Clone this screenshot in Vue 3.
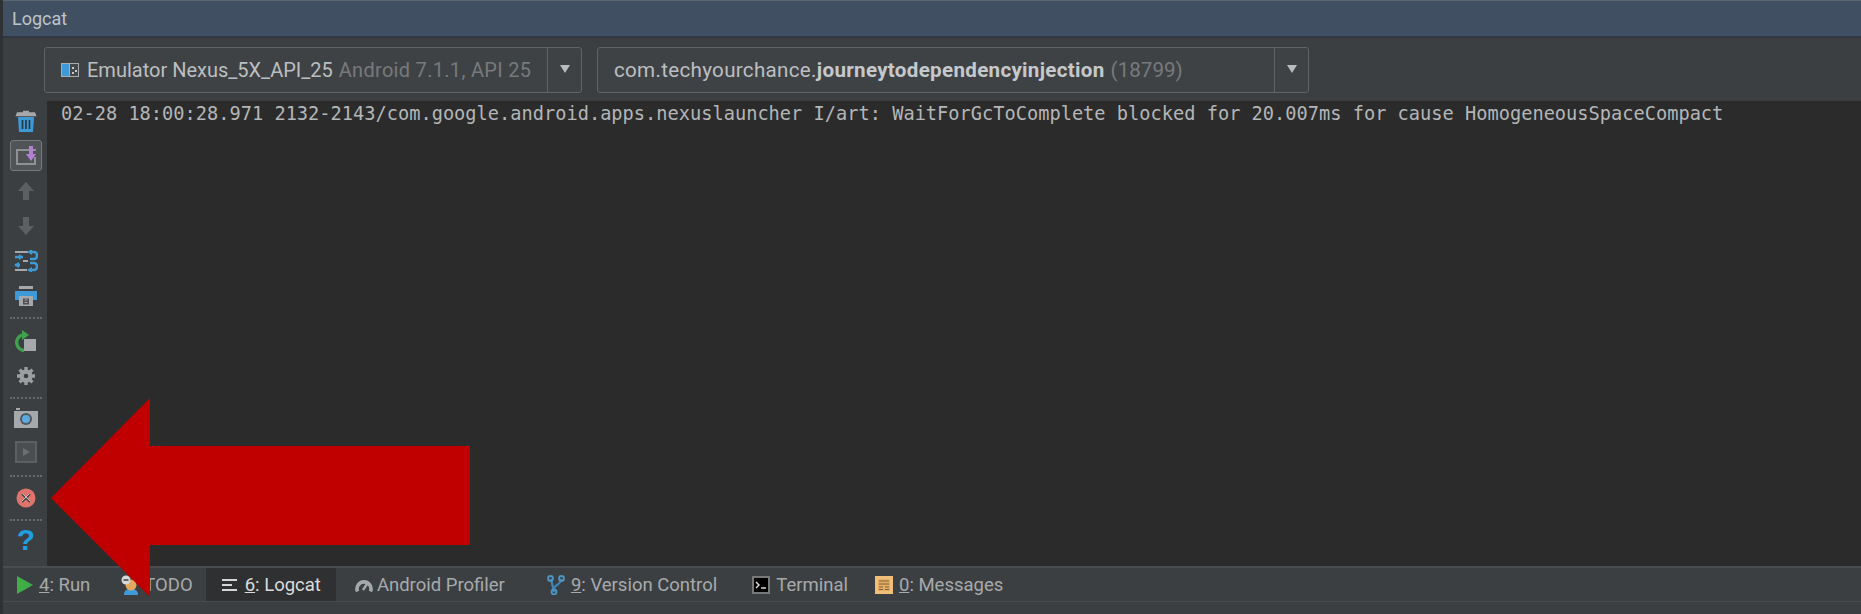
<script setup>
const logLine = '02-28 18:00:28.971 2132-2143/com.google.android.apps.nexuslauncher I/art: WaitForGcToComplete blocked for 20.007ms for cause HomogeneousSpaceCompact'
</script>

<template>
  <div class="window">
    <header class="title">Logcat</header>

    <div class="toolbar">
      <div class="combo combo-device">
        <div class="combo-value">
          <svg class="device-icon" viewBox="0 0 18 16" width="18" height="16">
            <rect x="0" y="1" width="18" height="14" fill="#a9adb0" />
            <rect x="1" y="2" width="7" height="12" fill="#3d9ad6" />
            <rect x="9" y="2" width="8" height="12" fill="#45484a" />
            <rect x="11" y="5" width="2" height="2" fill="#c8c8c8" />
            <rect x="14" y="8" width="2" height="2" fill="#c8c8c8" />
            <rect x="11" y="10" width="2" height="2" fill="#c8c8c8" />
          </svg>
          <span>Emulator Nexus_5X_API_25</span>
          <span class="muted">Android 7.1.1, API 25</span>
        </div>
        <div class="combo-arrow"><i></i></div>
      </div>
      <div class="combo combo-process">
        <div class="combo-value">
          <span class="pkg">com.techyourchance.<b>journeytodependencyinjection</b></span>
          <span class="muted">(18799)</span>
        </div>
        <div class="combo-arrow"><i></i></div>
      </div>
    </div>

    <main class="body">
      <aside class="side">
        <button class="tool">
          <svg viewBox="0 0 22 24" width="22" height="24">
            <path d="M8 2.5h6M1.5 6.5l1-2.5h17l1 2.5z" fill="#a6a9ab" stroke="#a6a9ab" stroke-width="1.4" />
            <path d="M3 8h16l-1 15H4z" fill="#3d9ad6" />
            <path d="M7.5 11v9M11 11v9M14.5 11v9" stroke="#23333f" stroke-width="1.6" />
          </svg>
        </button>
        <button class="tool tool-on">
          <svg viewBox="0 0 24 22" width="24" height="22">
            <path d="M2 4h20v2H4v12h16V12h2v8H2z" fill="#8f9294" />
            <rect x="4" y="6" width="12" height="12" fill="#4f5254" />
            <path d="M15 1h4v8h3l-5 7-5-7h3z" fill="#b57fd6" />
          </svg>
        </button>
        <button class="tool">
          <svg viewBox="0 0 18 20" width="18" height="20"><path d="M9 1l8 9h-5v9H6v-9H1z" fill="#5d6062" /></svg>
        </button>
        <button class="tool">
          <svg viewBox="0 0 18 20" width="18" height="20"><path d="M9 19l8-9h-5V1H6v9H1z" fill="#5d6062" /></svg>
        </button>
        <button class="tool">
          <svg viewBox="0 0 24 22" width="24" height="22">
            <path d="M1 2h13M1 20h12M9 11h5" stroke="#a6a9ab" stroke-width="2" fill="none" />
            <path d="M1 7h8M1 15h5" stroke="#3d9ad6" stroke-width="2.6" fill="none" />
            <path d="M16 2h4a3 3 0 0 1 3 3v1a3 3 0 0 1-3 3h-4M16 13h4a3 3 0 0 1 3 3v1a3 3 0 0 1-3 3h-4" stroke="#3d9ad6" stroke-width="2.6" fill="none" />
            <path d="M18 -1l-5 3 5 3zM18 17l-5 3 5 3zM5 10l4-3-4-3zM5 12v6l-5-3z" fill="#3d9ad6" />
          </svg>
        </button>
        <button class="tool">
          <svg viewBox="0 0 22 22" width="22" height="22">
            <rect x="4" y="1" width="14" height="3" fill="#a6a9ab" />
            <path d="M0 6h22v9h-4v-4H4v4H0z" fill="#3d9ad6" />
            <rect x="4" y="11" width="14" height="10" fill="#a6a9ab" />
            <path d="M8 13.5h6v6H8z" fill="#4b4e50" />
            <path d="M9.5 15h3M9.5 17.5h3" stroke="#a6a9ab" stroke-width="1.2" />
          </svg>
        </button>
        <div class="sep"></div>
        <button class="tool">
          <svg viewBox="0 0 22 22" width="22" height="22">
            <rect x="9" y="9" width="12" height="12" fill="#a6a9ab" />
            <path d="M9 20.5A8 8 0 0 1 7 5" stroke="#3fa34d" stroke-width="3.4" fill="none" />
            <path d="M7 0l7 5-7 5z" fill="#3fa34d" />
          </svg>
        </button>
        <button class="tool">
          <svg viewBox="0 0 20 20" width="20" height="20">
            <circle cx="10" cy="10" r="4.6" fill="none" stroke="#9c9fa1" stroke-width="4" />
            <path d="M10 1v18M1 10h18M3.6 3.6l12.8 12.8M16.4 3.6L3.6 16.4" stroke="#9c9fa1" stroke-width="3.4" />
            <circle cx="10" cy="10" r="2.3" fill="#3c3f41" />
          </svg>
        </button>
        <div class="sep"></div>
        <button class="tool">
          <svg viewBox="0 0 24 20" width="24" height="20">
            <rect x="2" y="0" width="4" height="2" fill="#a6a9ab" />
            <path d="M0 3h24v17H0z" fill="#a6a9ab" />
            <circle cx="12" cy="11" r="6" fill="#53575a" />
            <circle cx="12" cy="11" r="4" fill="#5aa9e0" />
          </svg>
        </button>
        <button class="tool">
          <svg viewBox="0 0 22 22" width="22" height="22">
            <rect x="1" y="1" width="20" height="20" fill="#4b4e50" stroke="#5d6062" stroke-width="2" />
            <path d="M8 7l7 4-7 4z" fill="#6c7072" />
          </svg>
        </button>
        <div class="sep"></div>
        <button class="tool">
          <svg viewBox="0 0 20 20" width="20" height="20">
            <circle cx="10" cy="10" r="9.5" fill="#e0736d" />
            <path d="M6 6l8 8M14 6l-8 8" stroke="#48494a" stroke-width="2" />
            <path d="M6.5 5.5l8 8M13.5 5.5l-8 8" stroke="#e8d8d0" stroke-width=".8" />
          </svg>
        </button>
        <div class="sep"></div>
        <button class="tool help">?</button>
      </aside>
      <pre class="log">{{ logLine }}</pre>
    </main>

    <footer class="dock">
      <div class="tabs">
        <div class="tab tab-run">
          <svg viewBox="0 0 16 18" width="16" height="18"><path d="M0 0l16 9-16 9z" fill="#3fae49" /></svg>
          <span><u>4</u>: Run</span>
        </div>
        <div class="tab tab-todo">
          <svg viewBox="0 0 20 20" width="20" height="20">
            <path d="M3 20c0-5 3-6 7-6s7 1 7 6z" fill="#3d9ad6" />
            <circle cx="10" cy="10" r="5.5" fill="#e2a65e" />
            <circle cx="5" cy="5" r="4.5" fill="#d8d8d8" />
            <path d="M2.5 5h5" stroke="#45484a" stroke-width="1.6" />
          </svg>
          <span>TODO</span>
        </div>
        <div class="tab tab-active">
          <svg viewBox="0 0 16 12" width="16" height="12"><path d="M0 1h15M0 6h10M0 11h15" stroke="#d6d6d6" stroke-width="2" /></svg>
          <span><u>6</u>: Logcat</span>
        </div>
        <div class="tab tab-profiler">
          <svg viewBox="0 0 18 14" width="18" height="14">
            <path d="M2.5 13.5A7 7 0 1 1 15.5 13.5" fill="none" stroke="#a6a9ab" stroke-width="3.6" />
            <path d="M8 12l4-6" stroke="#a6a9ab" stroke-width="2.4" />
          </svg>
          <span>Android Profiler</span>
        </div>
        <div class="tab tab-vcs">
          <svg viewBox="0 0 18 20" width="18" height="20">
            <path d="M4 4l3 13M14 4c0 5-4 5-7 9" fill="none" stroke="#3e86b8" stroke-width="2.2" />
            <circle cx="3.5" cy="3.5" r="2.4" fill="none" stroke="#4d94c2" stroke-width="2" />
            <circle cx="14.5" cy="3.5" r="2.4" fill="none" stroke="#4d94c2" stroke-width="2" />
            <circle cx="7" cy="17" r="2.4" fill="none" stroke="#4d94c2" stroke-width="2" />
          </svg>
          <span><u>9</u>: Version Control</span>
        </div>
        <div class="tab tab-terminal">
          <svg viewBox="0 0 18 18" width="18" height="18">
            <rect x="1" y="1" width="16" height="16" fill="#000" stroke="#77797b" stroke-width="2" />
            <path d="M4 6l3 3-3 3" fill="none" stroke="#e8e8e8" stroke-width="1.4" />
            <path d="M9 12h5" stroke="#e8e8e8" stroke-width="1.4" />
          </svg>
          <span>Terminal</span>
        </div>
        <div class="tab tab-messages">
          <svg viewBox="0 0 18 18" width="18" height="18">
            <rect x="0" y="0" width="18" height="18" fill="#f0bf79" />
            <rect x="3" y="3" width="12" height="12" fill="#e8ad62" />
            <path d="M4 5h10M4 8h10M4 11h4M10 11h4M4 13.5h4M10 13.5h4" stroke="#7a6240" stroke-width="1" />
          </svg>
          <span><u>0</u>: Messages</span>
        </div>
      </div>
    </footer>

    <svg class="callout" viewBox="0 0 1861 614" width="1861" height="614">
      <path d="M51 498L150 398V446H470V545H150V597z" fill="#c00000" />
    </svg>
  </div>
</template>

<style scoped>
.window {
  position: relative;
  display: flex;
  flex-direction: column;
  width: 1861px;
  height: 614px;
  box-sizing: border-box;
  overflow: hidden;
  border-left: 3px solid #2f3133;
  background: #3c3f41;
  font-family: Roboto, "Noto Sans", sans-serif;
}
.title {
  flex: none;
  height: 38px;
  box-sizing: border-box;
  padding-left: 9px;
  border-top: 1px solid #5a6470;
  border-bottom: 2px solid #2f3744;
  background: #414f63;
  color: #bfc4ca;
  font-size: 18px;
  line-height: 36px;
}
.toolbar {
  flex: none;
  display: flex;
  gap: 15px;
  height: 63px;
  box-sizing: border-box;
  padding: 9px 0 0 41px;
  background: #3c3f41;
}
.combo {
  display: flex;
  height: 46px;
  box-sizing: border-box;
  border: 1px solid #606364;
  border-radius: 3px;
  background: #3f4244;
  color: #bcbfc1;
  font-size: 20px;
}
.combo-device { width: 538px; }
.combo-process { width: 712px; font-size: 20.6px; }
.combo-device .muted { letter-spacing: .3px; }
.combo-value {
  flex: 1;
  display: flex;
  align-items: center;
  gap: 6px;
  padding-left: 16px;
  white-space: nowrap;
}
.pkg { letter-spacing: .3px; }
.pkg b { color: #c6c9cb; font-weight: 700; }
.device-icon { margin-right: 2px; }
.muted { color: #777a7c; }
.combo-arrow {
  flex: none;
  display: flex;
  align-items: center;
  justify-content: center;
  width: 34px;
  padding-bottom: 2px;
  box-sizing: border-box;
  border-left: 1px solid #606364;
}
.combo-arrow i {
  width: 0;
  height: 0;
  border-left: 5px solid transparent;
  border-right: 5px solid transparent;
  border-top: 8px solid #b9bcbe;
}
.body {
  flex: 1;
  display: flex;
  min-height: 0;
  background: #2b2b2b;
}
.side {
  flex: none;
  display: grid;
  grid-template-rows: 35px 35px 35px 35px 35px 35px 10px 35px 35px 10px 30px 38px 10px 34px 10px 30px;
  align-content: start;
  justify-items: center;
  width: 44px;
  box-sizing: border-box;
  padding: 2px 0 0 2px;
  background: #3c3f41;
}
.tool {
  display: flex;
  align-items: center;
  justify-content: center;
  width: 32px;
  padding: 0;
  border: 0;
  background: none;
}
.tool-on {
  height: 31px;
  align-self: center;
  box-sizing: border-box;
  border: 1px solid #77797b;
  border-radius: 3px;
  background: #515456;
}
.sep {
  align-self: center;
  width: 32px;
  border-top: 2px dotted #666a6c;
}
.help {
  color: #1f9ee0;
  font-family: "Liberation Sans", sans-serif;
  font-size: 30px;
  font-weight: 700;
  line-height: 30px;
}
.log {
  flex: 1;
  margin: 0;
  padding: 1px 0 0 14px;
  color: #b4b6b8;
  font-family: "DejaVu Sans Mono", monospace;
  font-size: 18.66px;
  line-height: 24px;
  white-space: pre;
}
.dock {
  flex: none;
  height: 48px;
  box-sizing: border-box;
  border-top: 2px solid #4a4d4f;
  background: #3c3f41;
}
.tabs {
  display: flex;
  height: 33px;
  border-bottom: 1px solid #464a4c;
}
.tab {
  display: flex;
  align-items: center;
  gap: 6px;
  padding: 0 16px;
  color: #a7aaac;
  font-size: 18.5px;
  white-space: nowrap;
}
.tab-run { padding: 0 14px; }
.tab-todo { gap: 3px; padding: 0 13px 0 17px; }
.tab-active {
  gap: 7px;
  padding-right: 15px;
  background: #2e3032;
  color: #dcdcdc;
}
.tab-profiler { gap: 4px; padding-left: 19px; }
.tab-vcs { padding-left: 26px; }
.tab-terminal { padding-left: 19px; }
.tab-messages { padding-left: 11px; }
.callout {
  position: absolute;
  top: 0;
  left: -3px;
  pointer-events: none;
}
</style>
